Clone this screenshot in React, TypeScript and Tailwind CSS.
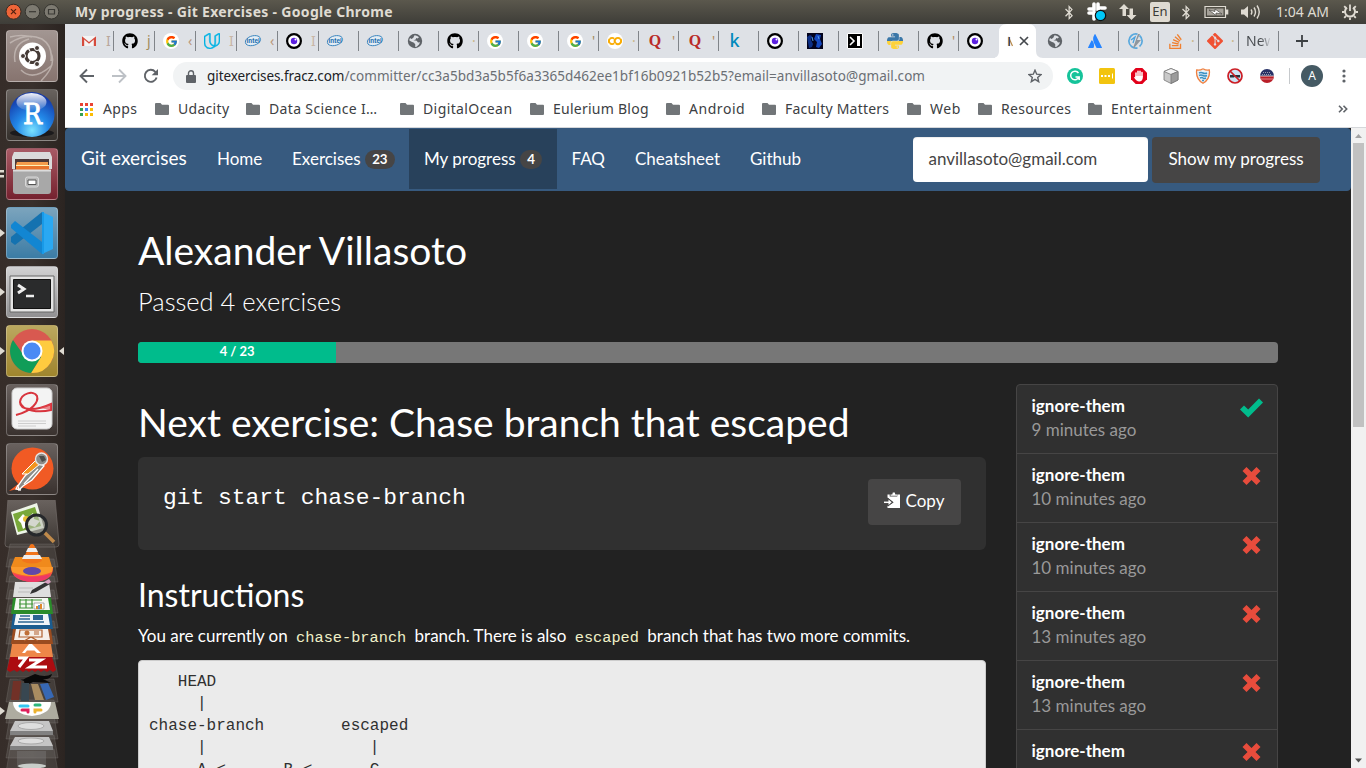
import React from "react";
import { FcGoogle } from "react-icons/fc";
import { FaGithub, FaBluetoothB } from "react-icons/fa";
import { SiUdacity, SiStackoverflow, SiGit, SiGooglecolab, SiAtlassian, SiPython } from "react-icons/si";

const Dot = ({ children }: { children: React.ReactNode }) => (
  <span className="flex size-4 items-center justify-center rounded-full bg-white">{children}</span>
);

const GmailIcon = () => (
  <svg width="16" height="16" viewBox="0 0 16 16">
    <path d="M1 3h14v10H1z" fill="#f4f4f4" />
    <path d="M1 13V3.2L8 9l7-5.800V13h-2.200V6.600L8 10.800 3.200 6.600V13z" fill="#d54b3d" />
  </svg>
);
const EyeIcon = () => (
  <svg width="16" height="16" viewBox="0 0 16 16">
    <circle cx="8" cy="8" r="6.900" fill="#fff" stroke="#000" strokeWidth="2.200" />
    <circle cx="8" cy="8" r="3.200" fill="#5b1fe0" />
    <circle cx="9.500" cy="6.500" r="1" fill="#fff" />
  </svg>
);
const GlobeIcon = () => (
  <svg width="16" height="16" viewBox="0 0 16 16">
    <circle cx="8" cy="8" r="7.200" fill="#5f6368" />
    <path d="M7.500 2.200c2 .3 3.300.7 4.500 2L10.500 5.500 9.200 5 8.700 6.500 6.500 7.300l3.200.5 1.300 1.700 2-.2-1 2.200-2.400 2.200L8.200 14l.1-2.600L7 9.800 4 8.500 2.200 7.200 3 5l1.500 1 1.800-1.200z" fill="#dee1e6" />
  </svg>
);
const IntelIcon = () => (
  <svg width="18" height="16" viewBox="0 0 18 16">
    <path d="M2 11C-.5 7 5 2.800 10.500 2.600c5.500-.2 7.500 3.200 5 6.400-3 3.800-11 5-13.500 2" fill="#e3edf5" stroke="#3a84bd" strokeWidth="1" />
    <text x="2.600" y="10" fontSize="6.400" fontWeight="700" fontFamily="Liberation Sans, sans-serif" fill="#1769aa">intel</text>
  </svg>
);
const SpaceIcon = () => (
  <svg width="16" height="16" viewBox="0 0 16 16">
    <path d="M0 0h16v16H0z" fill="#03031c" />
    <path d="M0 4l3-2 2 1-1 4 2 4-1 3-3 1z" fill="#0c2f86" />
    <path d="M9 1l5 1-1 4 2 5-3 4-3-1 1-5-3-3z" fill="#1548c0" />
    <path d="M5 4l1 4M11 3l1 3" stroke="#4f9be8" fill="none" strokeWidth="1" />
  </svg>
);
const PromptIcon = () => (
  <svg width="16" height="16" viewBox="0 0 16 16">
    <path d="M.5.500h15v15H.5z" fill="#000" stroke="#fff" />
    <path d="M3 4l4 4-4 4" fill="none" stroke="#fff" strokeWidth="1.600" />
    <path d="M10 3h3v10h-3z" fill="#fff" />
  </svg>
);
const PythonIcon = () => (
  <svg width="16" height="16" viewBox="0 0 24 24">
    <defs>
      <linearGradient id="py" x1="0" y1="0" x2="0" y2="1">
        <stop offset="0.480" stopColor="#3b77a8" />
        <stop offset="0.520" stopColor="#fdd23a" />
      </linearGradient>
    </defs>
    <SiPython size={24} fill="url(#py)" />
  </svg>
);
const SketchIcon = () => (
  <svg width="18" height="18" viewBox="0 0 18 18">
    <path d="M11.500 2.200A7 7 0 1 0 11.500 15.800M13.500 3.500a7 7 0 0 1 0 11" fill="none" stroke="#5aa9de" strokeWidth="1.700" />
    <path d="M7 16l5-14h2l-3 6h4L8 16z" fill="#8e969d" />
    <path d="M5 8l4-3-2 6" fill="none" stroke="#4aa3df" strokeWidth="1.300" />
  </svg>
);
const QuoraIcon = () => <span className="-mt-px font-['Liberation_Serif',serif] text-[16px] leading-5 font-bold text-[#b92b27]">Q</span>;

const tabs: { icon: React.ReactNode; text: string; wide?: boolean; ink: string }[] = [
  { icon: <GmailIcon />, text: "I", wide: true, ink: "text-[#b9a79b]" },
  { icon: <FaGithub size={16} className="text-black" />, text: "j", wide: true, ink: "text-[#a08a5a]" },
  { icon: <Dot><FcGoogle size={13} /></Dot>, text: "‹", wide: true, ink: "text-[#b9977b]" },
  { icon: <SiUdacity size={16} strokeWidth={0.8} stroke="currentColor" className="text-[#02b3e4]" />, text: "I", wide: true, ink: "text-[#c8b6a5]" },
  { icon: <IntelIcon />, text: "‹", wide: true, ink: "text-[#b9977b]" },
  { icon: <EyeIcon />, text: "I", wide: true, ink: "text-[#c8b6a5]" },
  { icon: <IntelIcon />, text: "", ink: "" },
  { icon: <IntelIcon />, text: "", ink: "" },
  { icon: <GlobeIcon />, text: "", ink: "" },
  { icon: <FaGithub size={16} className="text-black" />, text: "·", ink: "text-[#c9b68a]" },
  { icon: <Dot><FcGoogle size={13} /></Dot>, text: "", ink: "" },
  { icon: <Dot><FcGoogle size={13} /></Dot>, text: "", ink: "" },
  { icon: <Dot><FcGoogle size={13} /></Dot>, text: "'", ink: "text-[#a08a5a]" },
  { icon: <Dot><SiGooglecolab size={14} className="text-[#f9ab00]" /></Dot>, text: "·", ink: "text-[#c9b68a]" },
  { icon: <QuoraIcon />, text: "'", ink: "text-[#b08a5a]" },
  { icon: <QuoraIcon />, text: "'", ink: "text-[#b08a5a]" },
  { icon: <span className="-mt-0.5 -ml-px font-['Noto_Sans',sans-serif] text-[18px] leading-5 font-medium text-[#008abc]">k</span>, text: "", ink: "" },
  { icon: <EyeIcon />, text: "", ink: "" },
  { icon: <SpaceIcon />, text: "", ink: "" },
  { icon: <PromptIcon />, text: "", ink: "" },
  { icon: <PythonIcon />, text: "", ink: "" },
  { icon: <FaGithub size={16} className="text-black" />, text: "'", ink: "text-[#b08a5a]" },
  { icon: <EyeIcon />, text: "", ink: "" },
];
const tabsAfter = [
  { icon: <GlobeIcon />, text: "" },
  { icon: <SiAtlassian size={14} className="text-[#2684ff]" />, text: "" },
  { icon: <SketchIcon />, text: "" },
  { icon: <SiStackoverflow size={15} className="text-[#f08030]" />, text: "·" },
  { icon: <SiGit size={16} className="text-[#f05133]" />, text: "·" },
];

const bookmarks: [string, string, string][] = [
  ["Udacity", "w-[91px]", "tracking-[0.300px]"],
  ["Data Science I…", "w-[154px]", "tracking-[0.350px]"],
  ["DigitalOcean", "w-[130px]", "tracking-[0.400px]"],
  ["Eulerium Blog", "w-[136px]", "tracking-[0.250px]"],
  ["Android", "w-[96px]", "tracking-[0.550px]"],
  ["Faculty Matters", "w-[145px]", "tracking-[0.220px]"],
  ["Web", "w-[71px]", "tracking-[0.500px]"],
  ["Resources", "w-[110px]", "tracking-[0.350px]"],
  ["Entertainment", "w-[240px]", "tracking-[0.450px]"],
];

const attempts: [string, boolean][] = [
  ["9 minutes ago", true],
  ["10 minutes ago", false],
  ["10 minutes ago", false],
  ["13 minutes ago", false],
  ["13 minutes ago", false],
  ["", false],
];

const TitleBar = () => (
  <div className="flex h-6 shrink-0 items-center bg-linear-to-b from-[#5b584d] to-[#3e3d38] font-['Noto_Sans',sans-serif] text-[#dfdbd2]">
    <svg width="65" height="24" viewBox="0 0 65 24" className="mr-[10px]">
      <circle cx="13.500" cy="11.700" r="7.500" fill="#ee6538" stroke="#3a2a22" />
      <path d="M11 9.200l5 5m0-5l-5 5" stroke="#50200f" strokeWidth="1.200" />
      <circle cx="32.500" cy="11.700" r="7.300" fill="#7d7a71" stroke="#35342f" />
      <path d="M29 11.700h7" stroke="#3a3935" strokeWidth="1.200" />
      <circle cx="51.500" cy="11.700" r="7.300" fill="#7d7a71" stroke="#35342f" />
      <path d="M48.500 9.500h6v4.500h-6z" fill="none" stroke="#3a3935" strokeWidth="1.200" />
    </svg>
    <span className="-mt-0.5 w-[988px] text-[14px] font-bold tracking-[0.310px] whitespace-nowrap">My progress - Git Exercises - Google Chrome</span>
    <FaBluetoothB size={15} className="-ml-0.5 w-4" />
    <svg width="22" height="24" viewBox="0 0 22 24" className="ml-[9px]">
      <path d="M8 4v6M3 9h5M12 4v6M12 8h7M3 13h6M8 13v6" stroke="#fff" strokeWidth="3.600" strokeLinecap="round" />
      <circle cx="14.500" cy="15.500" r="5.200" fill="#00c8f8" stroke="#111" strokeWidth="1.200" />
    </svg>
    <svg width="18" height="18" viewBox="0 0 18 18" className="ml-[11px]" fill="#dfdbd2">
      <path d="M5 1l5 5H7v7H3.500V6H0zM12.500 17l-5-5h3V5.500H14V12h3.500z" />
    </svg>
    <span className="ml-[13px] flex h-5 w-5 items-center justify-center rounded-[2px] bg-[#dfdbd2] text-[13px] text-[#3c3b37]">En</span>
    <FaBluetoothB size={15} className="ml-2 w-4" />
    <svg width="25" height="14" viewBox="0 0 25 14" className="ml-[10px]">
      <path d="M1 1.500h20.500v11H1z" fill="none" stroke="#dfdbd2" strokeWidth="1.200" />
      <path d="M3 3.500h16.500v7H3z" fill="#a5a199" />
      <path d="M22 4.500h2.300v5H22" fill="#dfdbd2" />
      <path d="M5 5l6 1.500V4l7 5-6-1v2.500z" fill="#fff" stroke="#45443f" strokeWidth=".7" />
    </svg>
    <svg width="22" height="18" viewBox="0 0 22 18" className="ml-[11px]" fill="none" stroke="#dfdbd2" strokeWidth="1.400">
      <path d="M1 6.500h3L8 3v12l-4-3.500H1z" fill="#dfdbd2" stroke="none" />
      <path d="M11 6.500q1.800 2.500 0 5M14 4.500q3 4.500 0 9M17 2.500q4.500 6.500 0 13" />
    </svg>
    <span className="-mt-0.5 ml-[14px] w-[54px] text-[14px] whitespace-nowrap">1:04 AM</span>
    <svg width="18" height="18" viewBox="0 0 18 18" className="ml-[11px]" fill="none" stroke="#dfdbd2">
      <path d="M6 4.600a5 5 0 1 0 6 0" strokeWidth="2" />
      <path d="M9 1.500V8" strokeWidth="1.800" />
      <path d="M1 9h2.500M14.500 9H17M3.200 3.200L5 5M14.800 3.200L13 5M3.200 14.800L5 13M14.800 14.800L13 13M9 14.500V17" strokeWidth="1.800" />
    </svg>
  </div>
);

const Tile = ({ bg, mark, front, children }: { bg: string; mark?: string; front?: boolean; children: React.ReactNode }) => (
  <div className="flex h-[52px] w-[65px] shrink-0 items-center">
    <span className="w-1.5">
      {mark && (
        <svg width="5" height="10" viewBox="0 0 5 10" fill="#dfdbd2">
          <path d={mark} />
        </svg>
      )}
    </span>
    <div className={"flex size-[52px] items-center justify-center overflow-hidden rounded-[4px] border border-white/25 " + bg}>{children}</div>
    {front && (
      <svg width="6" height="10" viewBox="0 0 6 10" fill="#dfdbd2">
        <path d="M6 1v8L1 5z" />
      </svg>
    )}
  </div>
);
const arrow = "M0 1l5 4-5 4z";

const Stack = () => (
  <svg width="65" height="268" viewBox="0 500 65 268" className="shrink-0">
    <defs>
      <linearGradient id="glass" x1="0" y1="0" x2="0" y2="1">
        <stop offset="0" stopColor="#6b6460" />
        <stop offset="1" stopColor="#3a3430" />
      </linearGradient>
    </defs>
    <path d="M8 498h47l4 46q0 3-3 3H8q-3 0-3-3z" fill="url(#glass)" stroke="#726c68" strokeWidth=".7" />
    {[545, 560, 577, 591, 606, 622, 637, 655, 680, 701, 717, 736, 750].map((y) => (
      <path key={y} d={`M10 ${y - 1}h44l4 23H6z`} fill="#7d777344" stroke="#8a848066" strokeWidth=".7" />
    ))}
    <path d="M11 512l26-9 7 25-27 7z" fill="#eef5e8" />
    <path d="M13 514l22-7 6 19-23 6z" fill="#79a83a" />
    <path d="M18 520l5-6 4 4 6-5 1 6 6 2-5 6-6-2-6 4-2-6z" fill="#fff" />
    <circle cx="26" cy="519" r="3" fill="#eac036" />
    <path d="M44 532l10 10" stroke="#c08a4a" strokeWidth="3.500" />
    <circle cx="36.500" cy="525" r="10" fill="#b8bdaf99" stroke="#26282b" strokeWidth="3" />
    <path d="M15 557h34l3 10H11z" fill="#f08a1c" />
    <path d="M30 545q2-2 4 0l8 16q-10 5-20 0z" fill="#f1741b" />
    <path d="M28 548h8l2 4H26zM24 555h16l2 4H22z" fill="#eee" />
    <path d="M11 567h42q1 14-20 15-22-1-22-15" fill="#f9543e" />
    <path d="M11 567h42l-1 5q-20 8-40 0z" fill="#fb9a2c" />
    <path d="M13 574q18 6 38 0-5 8-18 8t-20-8" fill="#ed3868" />
    <ellipse cx="32" cy="571" rx="9" ry="4" fill="#5f48a8" />
    <path d="M15 582h34l2 15H13z" fill="#dedede" />
    <path d="M19 588h14M18 592h12" stroke="#bbb" />
    <path d="M30 594l2-4 14-8 4 2-14 8z" fill="#333" />
    <path d="M44 582l5-3 2 3-3 2z" fill="#d8a0c0" />
    <path d="M13 598h38l2 16H11z" fill="#2a8b2a" />
    <path d="M16 598h32l2 12H14z" fill="#f5f8f2" />
    <path d="M20 599v9M26 599v9M32 599v9M20 600h22M19 604h14M19 608h14" stroke="#3d9436" strokeWidth="1.200" fill="none" />
    <path d="M34 603h10v6H34z" fill="#fff" stroke="#777" strokeWidth=".6" />
    <path d="M37 609v-3M41 609v-5" stroke="#e08a2a" strokeWidth="2" />
    <path d="M39 609v-4" stroke="#3a78b8" strokeWidth="1.500" />
    <path d="M13 614h38l2 15H11z" fill="#1b5c8f" />
    <path d="M16 614h32l2 11H14z" fill="#f1f5f8" />
    <path d="M20 616h10M19 619h11M18 622h26" stroke="#2d6591" strokeWidth="1.300" />
    <path d="M33 615h10v5H33z" fill="#2d6591" />
    <path d="M13 629h38l2 15H11z" fill="#9a4c20" />
    <path d="M16 629h32l2 11H14z" fill="#f6efe8" />
    <path d="M20 630h22v7H19zM24 641l7-4 7 4M34 632h5M34 634h5" fill="none" stroke="#b05e2c" strokeWidth="1.200" />
    <circle cx="27" cy="633" r="2.500" fill="#c07038" />
    <path d="M12 644h39l2 13H10z" fill="#ee8748" />
    <path d="M22 653l7-9h3l9 9h-4l-2.500-2.500H27L25 653z" fill="#fff" />
    <path d="M10 657h42l4 13-3 2-3-2-3 2-3-2-3 2-3-2-3 2-3-2-3 2-3-2-3 2-3-2-3 2-3-2-4 2-3-2z" fill="#ac0c10" />
    <path d="M18 658h8l-7 9M29 660h12l-11 7h17" fill="none" stroke="#fff" strokeWidth="3" />
    <path d="M16 678q6 3 10 0l9-4q10 4 17 0-1 6-9 5l8 4-18-1-8 4-1-5z" fill="#090909" />
    <path d="M13 681h8l-2 19h-8z" fill="#713127" />
    <path d="M22 683h7v18h-8z" fill="#384751" />
    <path d="M31 684h7l6 16h-9z" fill="#a98c61" />
    <path d="M40 684l8-1 6 14-8 3z" fill="#3768b4" />
    <path d="M9 702h46l4 17H5z" fill="#aeaca0" />
    <path d="M13 702h38q0 12-19 14-19-2-19-14" fill="#fff" />
    <path d="M20 706h8" stroke="#36c5f0" strokeWidth="3" strokeLinecap="round" />
    <path d="M35 705h5" stroke="#2eb67d" strokeWidth="3" strokeLinecap="round" />
    <path d="M22 710h6v2" stroke="#e01e5a" strokeWidth="3" strokeLinecap="round" fill="none" />
    <path d="M35 712v-2h6" stroke="#ecb22e" strokeWidth="3" strokeLinecap="round" fill="none" />
    <path d="M0 707l5 4-5 4z" fill="#dfdbd2" />
    <path d="M15 721h34l4 10H10z" fill="#c5c5c5" />
    <path d="M10 731h43v4H10z" fill="#818181" />
    <ellipse cx="31" cy="726" rx="13" ry="3.500" fill="#dedede" stroke="#aaa" />
    <path d="M15 737h34l4 9H10z" fill="#c5c5c5" />
    <path d="M10 746h43v4H10z" fill="#818181" />
    <ellipse cx="31" cy="741" rx="13" ry="3" fill="#dedede" stroke="#aaa" />
    <path d="M17 751h29v16H17z" fill="#8885" />
    <ellipse cx="32" cy="766" rx="14" ry="2.500" fill="#c8cdc9" />
  </svg>
);

const Launcher = () => (
  <div className="flex w-[65px] shrink-0 flex-col gap-[7px] overflow-hidden bg-linear-to-r from-[#362d29] via-[#38302c] to-[#2b2421] pt-1.5">
    <Tile bg="bg-linear-to-b from-[#a29692] to-[#87746f]">
      <svg width="50" height="50" viewBox="0 0 50 50">
        <path d="M3 12Q20 1 35 8q11 7 9 22M8 31Q5 13 22 8M14 39q12 12 30-4M44 22q6 12-10 28M3 6q12-3 22 0" fill="none" stroke="#d0c6c2" strokeWidth="1.500" opacity=".65" />
        <circle cx="25.500" cy="25" r="13.500" fill="#fff" />
        <circle cx="25.500" cy="25" r="6.500" fill="none" stroke="#463b37" strokeWidth="3.200" strokeDasharray="12.600 1" />
        <circle cx="16" cy="25" r="2.500" fill="#463b37" stroke="#fff" />
        <circle cx="30" cy="17" r="2.500" fill="#463b37" stroke="#fff" />
        <circle cx="30" cy="33" r="2.500" fill="#463b37" stroke="#fff" />
      </svg>
    </Tile>
    <Tile bg="bg-linear-to-b from-[#68625e] to-[#35302c]">
      <svg width="50" height="50" viewBox="0 0 50 50">
        <defs>
          <radialGradient id="rg" cx=".5" cy=".85" r=".8"><stop offset="0" stopColor="#7be3ff" /><stop offset=".45" stopColor="#2288e8" /><stop offset="1" stopColor="#1438a8" /></radialGradient>
          <linearGradient id="sh" x1="0" y1="0" x2="0" y2="1"><stop offset="0" stopColor="#fff" stopOpacity=".95" /><stop offset="1" stopColor="#fff" stopOpacity=".05" /></linearGradient>
        </defs>
        <ellipse cx="25" cy="43" rx="22" ry="4" fill="#1b1a1c" />
        <circle cx="25" cy="24.500" r="22.500" fill="url(#rg)" />
        <ellipse cx="24.500" cy="12" rx="15" ry="9" fill="url(#sh)" />
        <text x="16" y="34" fontSize="28" fontFamily="DejaVu Serif, serif" textLength="19" lengthAdjust="spacingAndGlyphs" fill="#fff" stroke="#fff" strokeWidth=".8">R</text>
      </svg>
    </Tile>
    <Tile bg="bg-linear-to-b from-[#a85a65] to-[#75212f]" mark="M0 1h4v2.500H0zM0 6h4v2.500H0z">
      <svg width="50" height="50" viewBox="0 0 50 50">
        <path d="M5 8l2-5h36l2 5v12H5z" fill="#dadada" />
        <path d="M8 10h34v12H8z" fill="#4c3837" />
        <path d="M10 13h31v3H9z" fill="#f49b4b" />
        <path d="M9 17h33v5H9z" fill="#e8742c" />
        <path d="M9 16.500h33" stroke="#fff0b5" />
        <path d="M6 21h38v21q0 3-3 3H9q-3 0-3-3z" fill="#a8a8a8" />
        <path d="M6 20.500h38v2H6z" fill="#dcdcdc" />
        <rect x="18.500" y="28" width="13" height="10" rx="2" fill="#b8b8b8" stroke="#d8d8d8" />
        <path d="M21 31h8v4.500h-8z" fill="#fff" stroke="#555" />
      </svg>
    </Tile>
    <Tile bg="bg-linear-to-b from-[#7ba4bd] to-[#3b7ca5]" mark={arrow}>
      <svg width="50" height="50" viewBox="0 0 50 50">
        <path d="M35 4l11 5v32l-11 5z" fill="#2aa8f2" />
        <path d="M35 4v12L8 37l-4-3v-5z" fill="#1472b0" />
        <path d="M4 17l4-4 27 21v12L4 20z" fill="#1286d2" />
        <path d="M35 4v42l2 0V4z" fill="#189ae8" />
      </svg>
    </Tile>
    <Tile bg="bg-linear-to-b from-[#d2d2d3] to-[#919092]" mark={arrow}>
      <svg width="50" height="50" viewBox="0 0 50 50">
        <path d="M3 9h44v36H3z" fill="#e4e4e4" stroke="#666" />
        <path d="M6.500 12.500h37v29h-37z" fill="#2a2b2c" stroke="#111" />
        <path d="M11 18l6 4-6 4" fill="none" stroke="#eee" strokeWidth="3" />
        <path d="M19 29h8" stroke="#eee" strokeWidth="2.500" />
      </svg>
    </Tile>
    <Tile bg="bg-linear-to-b from-[#bba85f] to-[#9f852d]" mark={arrow} front>
      <svg width="48" height="48" viewBox="0 0 48 48">
        <circle cx="24" cy="24" r="22" fill="#d85950" />
        <path d="M24 13.500h19.300A22 22 0 0 1 23 46l10-16z" fill="#fecb3f" />
        <path d="M5 13A22 22 0 0 0 23 46l10-16-16 0z" fill="#109d58" />
        <circle cx="24" cy="24" r="10.500" fill="#fff" />
        <circle cx="24" cy="24" r="8.500" fill="#4a8af4" />
      </svg>
    </Tile>
    <Tile bg="bg-linear-to-b from-[#69615e] to-[#3a322f]">
      <svg width="50" height="50" viewBox="0 0 50 50">
        <rect x="5" y="3" width="40" height="41" rx="5" fill="#f3f3f3" stroke="#ccc" />
        <path d="M9 30C25 26 32 17 30 11 27 5 14 8 13 17c0 9 16 9 31 2v6C32 28 15 26 13 17" fill="none" stroke="#d8343d" strokeWidth="2" />
        <path d="M32 23l12-4v6z" fill="#e2474f99" />
        <path d="M11 36h28M11 38.500h28M11 41h18" stroke="#c4c4c4" strokeWidth=".8" />
      </svg>
    </Tile>
    <Tile bg="bg-linear-to-b from-[#69615e] to-[#3a322f]">
      <svg width="50" height="50" viewBox="0 0 50 50">
        <circle cx="25.500" cy="24.500" r="21" fill="#f15a24" />
        <path d="M2 47l13-10 4 6z" fill="#f15a24" />
        <path d="M31 18l6 4-12 14-9 6-4 4-1-4 7-10z" fill="#8b8b88" stroke="#fff" strokeWidth="1.300" />
        <path d="M15 30l14-14 4 4-12 10z" fill="#f3941f" stroke="#fff" />
        <path d="M17 40l14-15" stroke="#fff" strokeWidth="1.300" />
        <circle cx="34.500" cy="15" r="6" fill="#8b8b88" stroke="#e5e5e5" strokeWidth="1.400" />
        <path d="M32 12h5l2 4-4 2z" fill="#4c4c4a" />
        <path d="M11 41l-2 4 5 1" stroke="#fff" strokeWidth="1.300" fill="none" />
      </svg>
    </Tile>
    <div className="-mt-[2px] flex"><Stack /></div>
  </div>
);

const TabStrip = () => (
  <div className="flex h-[34px] shrink-0 items-center bg-[#dee1e6] pl-2 font-['Noto_Sans',sans-serif] text-[14px] leading-5">
    {tabs.map((t, i) => (
      <div key={i} className={"flex h-5 shrink-0 items-center " + (t.wide ? "w-[41px] " : "w-10 ") + (i === tabs.length - 1 ? "" : "border-r border-[#808489]")}>
        <span className="ml-[7px] flex w-[18px] shrink-0 justify-center">{t.icon}</span>
        <span className={"ml-2 " + t.ink}>{t.text}</span>
      </div>
    ))}
    <div className="-ml-1 flex h-[34px] w-12 shrink-0 items-end">
      <svg width="48" height="34" viewBox="0 0 48 34" className="shrink-0">
        <path d="M-3 34Q4 34 4 27V8Q4 0 12 0H33Q41 0 41 8V27Q41 34 48 34z" fill="#fff" />
        <path d="M13.500 22V13l4 9" fill="none" stroke="#b98a4a" strokeWidth="1.200" />
        <path d="M14.500 22V13" stroke="#3c4a78" strokeWidth="1.200" />
        <path d="M25 13l8 8m0-8l-8 8" stroke="#45494d" strokeWidth="1.700" />
      </svg>
    </div>
    {tabsAfter.map((t, i) => (
      <div key={i} className={"flex h-5 w-10 shrink-0 items-center border-r border-[#808489] " + (i === 0 ? "-ml-1" : "")}>
        <span className="ml-[7px] flex w-[18px] shrink-0 justify-center">{t.icon}</span>
        <span className="ml-[7px] text-[#c9b68a]">{t.text}</span>
      </div>
    ))}
    <div className="flex h-5 w-10 shrink-0 items-center overflow-hidden border-r border-[#808489] pl-[7px]">
      <span className="w-[24px] overflow-hidden bg-linear-to-r from-[#45494d] from-60% to-[#45494d22] bg-clip-text whitespace-nowrap text-transparent">New</span>
    </div>
    <svg width="12" height="12" viewBox="0 0 12 12" className="ml-[17px]">
      <path d="M6 0v12M0 6h12" stroke="#3c4043" strokeWidth="1.800" />
    </svg>
  </div>
);

const Cell = ({ children }: { children: React.ReactNode }) => (
  <span className="flex w-8 shrink-0 items-center justify-center">{children}</span>
);

const Toolbar = () => (
  <div className="flex h-9 shrink-0 items-center bg-white pl-1.5 font-['Noto_Sans',sans-serif]">
    <Cell>
      <svg width="16" height="16" viewBox="0 0 16 16" fill="none" stroke="#5f6368" strokeWidth="1.900"><path d="M15 8H2M8 1.500L1.500 8 8 14.500" /></svg>
    </Cell>
    <Cell>
      <svg width="16" height="16" viewBox="0 0 16 16" fill="none" stroke="#bdc1c6" strokeWidth="1.900"><path d="M1 8h13M8 1.500L14.500 8 8 14.500" /></svg>
    </Cell>
    <Cell>
      <svg width="16" height="16" viewBox="0 0 16 16"><path d="M13.600 9.500A6 6 0 1 1 12.300 3.800L14 5.500" fill="none" stroke="#5f6368" strokeWidth="1.900" /><path d="M15 1v6.300H8.700z" fill="#5f6368" /></svg>
    </Cell>
    <div className="mr-1.5 ml-1.5 flex h-7 w-[880px] shrink-0 items-center rounded-full bg-[#f1f3f4] pr-[11px] pl-[13px]">
      <svg width="10" height="13" viewBox="0 0 10 13"><path d="M1 5h8q1 0 1 1v6q0 1-1 1H1q-1 0-1-1V6q0-1 1-1" fill="#5f6368" /><path d="M2.500 5.500V3.300a2.500 2.500 0 0 1 5 0v2.200" fill="none" stroke="#5f6368" strokeWidth="1.400" /></svg>
      <span className="ml-[11px] flex-1 text-[13.500px] whitespace-nowrap text-[#6b6f74]"><span className="tracking-[-0.080px] text-[#202124]">gitexercises.fracz.com</span><span className="tracking-[0.060px]">/committer/cc3a5bd3a5b5f6a3365d462ee1bf16b0921b52b5?email=anvillasoto@gmail.com</span></span>
      <svg width="14" height="14" viewBox="0 0 14 14"><path d="M7 1.200l1.700 4 4.300.4-3.300 2.800 1 4.300L7 10.400l-3.700 2.300 1-4.300L1 5.600l4.300-.4z" fill="none" stroke="#5f6368" strokeWidth="1.400" /></svg>
    </div>
    <Cell><svg width="16" height="16" viewBox="0 0 16 16"><circle cx="8" cy="8" r="8" fill="#15c39a" /><path d="M11.500 5A4.300 4.300 0 1 0 12 9H8.500M12.200 8.500V12" fill="none" stroke="#fff" strokeWidth="1.500" /></svg></Cell>
    <Cell><svg width="16" height="16" viewBox="0 0 16 16"><rect width="16" height="16" rx="1.500" fill="#f2c40f" /><path d="M2 7h2v2H2zM5.500 7h2v2h-2zM9 7h2v2H9zM13 5.500h1v5h-1z" fill="#fff" /></svg></Cell>
    <Cell><svg width="16" height="16" viewBox="0 0 16 16"><path d="M4.700 0h6.600L16 4.700v6.600L11.300 16H4.700L0 11.300V4.700z" fill="#e2001a" /><path d="M5 9V5M7 9V3.300M9 9V3.300M11 9V4.600" stroke="#fff" strokeWidth="1.500" strokeLinecap="round" /><path d="M4.300 8h7.400v2.500Q11 13.500 8.300 13.500 5.500 13.500 3 9.500q.5-1 1.500-.3z" fill="#fff" /></svg></Cell>
    <Cell><svg width="16" height="16" viewBox="0 0 16 16" stroke="#777" strokeWidth=".8"><path d="M8 .5l7 3v8.500l-7 3.500-7-3.500V3.500z" fill="#c9c9c9" /><path d="M8 .5l7 3-7 3-7-3z" fill="#f3f3f3" /><path d="M8 6.500v9l7-3.500V3.500z" fill="#9b9b9b" /></svg></Cell>
    <Cell><svg width="16" height="16" viewBox="0 0 16 16"><path d="M8 .7q3 2 6.300 1.300Q15.500 11 8 15.300.5 11 1.700 2 5 2.700 8 .7" fill="#e7f1f8" stroke="#f08040" strokeWidth="1.300" /><path d="M4 5q2-1 4 0t4 0M4 7.500q2-1 4 0t4 0M5 10q2-1 3 0t3 0M7 12.500h2" stroke="#3c91c4" strokeWidth="1.500" fill="none" /></svg></Cell>
    <Cell><svg width="16" height="16" viewBox="0 0 16 16"><circle cx="8" cy="8" r="7" fill="#cce4f5" /><path d="M3 7h10v2.500H9L8 8.500 7 9.500H3z" fill="#27313a" /><circle cx="8" cy="8" r="7" fill="none" stroke="#cc1e25" strokeWidth="1.700" /><path d="M3 3l10 10" stroke="#cc1e25" strokeWidth="1.700" /></svg></Cell>
    <Cell><svg width="16" height="16" viewBox="0 0 16 16"><path d="M1 8a7 7 0 0 1 14 0z" fill="#283267" /><path d="M1 8a7 7 0 0 0 14 0z" fill="#b91e28" /><path d="M1 8h14" stroke="#eee" strokeWidth=".8" /><path d="M2 11h12" stroke="#e8a0a4" strokeWidth=".8" /><path d="M4 4.500h8M3 6.500h10" stroke="#99a" strokeDasharray="1 1" /></svg></Cell>
    <span className="mr-[6px] ml-[6px] h-4 w-px bg-[#c6c9cc]" />
    <Cell><span className="flex size-[22px] items-center justify-center rounded-full bg-[#455a64] text-[12px] text-white">A</span></Cell>
    <Cell><svg width="4" height="14" viewBox="0 0 4 14" fill="#5f6368"><circle cx="2" cy="2" r="1.600" /><circle cx="2" cy="7" r="1.600" /><circle cx="2" cy="12" r="1.600" /></svg></Cell>
  </div>
);

const BookmarkBar = () => (
  <div className="flex h-[34px] shrink-0 items-center border-b border-[#d5d7da] bg-white pb-[3px] pl-[15px] font-['Noto_Sans',sans-serif] text-[14px] whitespace-nowrap text-[#3c4043]">
    <svg width="13" height="13" viewBox="0 0 13 13">
      {["#ea4335", "#ea4335", "#ea4335", "#34a053", "#4285f4", "#fbbc05", "#34a053", "#fbbc05", "#fbbc05"].map((c, i) => (
        <rect key={i} x={(i % 3) * 5} y={Math.floor(i / 3) * 5} width="3" height="3" fill={c} />
      ))}
    </svg>
    <span className="-mt-0.5 ml-[10px] w-[52px] tracking-[0.400px]">Apps</span>
    {bookmarks.map(([name, w, tracking]) => (
      <span key={name} className={"flex shrink-0 items-center gap-[9px] " + w}>
        <svg width="14" height="12" viewBox="0 0 14 12"><path d="M1 0h4.500L7 1.700h6q1 0 1 1V11q0 1-1 1H1q-1 0-1-1V1q0-1 1-1" fill="#717578" /></svg>
        <span className={"-mt-0.5 " + tracking}>{name}</span>
      </span>
    ))}
    <svg width="10" height="8" viewBox="0 0 10 8" className="ml-[10px]" fill="none" stroke="#5f6368" strokeWidth="1.600">
      <path d="M1 .8L4.200 4 1 7.200M5.500.8L8.700 4 5.500 7.200" />
    </svg>
  </div>
);

const Badge = ({ children }: { children: React.ReactNode }) => (
  <span className="mt-[3px] ml-[4.500px] flex h-[19px] items-center rounded-full bg-[#464545] px-[7px] pb-px text-[13.300px] font-bold">{children}</span>
);

const Navbar = () => (
  <nav className="flex h-[63px] shrink-0 items-start rounded-[4px] border border-[#375a7f] bg-[#375a7f] pl-[15px] text-white">
    <span className="w-[121px] pt-[15px] text-[19px] leading-7">Git exercises</span>
    <span className="flex h-[60px] w-[75px] px-[15px] pt-[18px]">Home</span>
    <span className="flex h-[60px] w-[132px] px-[15px] pt-[18px]">Exercises<Badge>23</Badge></span>
    <span className="flex h-[60px] w-[148px] bg-[#28415b] px-[15px] pt-[18px] whitespace-nowrap">My progress<Badge>4</Badge></span>
    <span className="w-[63px] px-[14.500px] pt-[18px]">FAQ</span>
    <span className="w-[115px] px-[15px] pt-[18px]">Cheatsheet</span>
    <span className="w-[81px] px-[15px] pt-[18px]">Github</span>
    <span className="mt-2 ml-[97px] h-[45px] w-[235px] rounded-[4px] bg-white px-[15.500px] pt-2.5 text-[#464545] inset-shadow-[0_1px_1px_#00000013]">anvillasoto@gmail.com</span>
    <span className="mt-2 ml-1 h-[46px] w-[168px] rounded-[4px] bg-[#464545] pt-2.5 text-center">Show my progress</span>
  </nav>
);

const Page = () => (
  <div className="flex min-h-0 flex-1 flex-col overflow-hidden bg-[#222] font-['Lato',sans-serif] text-[17px] leading-6 text-white">
    <Navbar />
    <main className="flex flex-col pr-[73px] pl-[73px]">
      <h1 className="mt-[38px] text-[39px] leading-[43px]">Alexander Villasoto</h1>
      <p className="mt-[11px] text-[25.500px] leading-9 font-light">Passed 4 exercises</p>
      <div className="mt-[23px] h-[21px] overflow-hidden rounded-[4px] bg-[#777]">
        <div className="h-full w-[17.391%] bg-[#00bc8c] text-center text-[13px] leading-[18px] font-bold">4 / 23</div>
      </div>
      <div className="mt-[21px] flex gap-[30px]">
        <section className="w-[848px]">
          <h2 className="mt-[17px] text-[39px] leading-[43px]">Next exercise: Chase branch that escaped</h2>
          <div className="mt-[13px] flex h-[93px] items-start justify-between rounded-[6px] bg-[#303030] pt-[22px] pr-[25px] pl-[25px]">
            <code className="mt-[3px] font-['Liberation_Mono',monospace] text-[22.950px] leading-[33px]">git start chase-branch</code>
            <span className="flex h-[46px] w-[93px] items-start rounded-[4px] bg-[#464545] pt-2.5 pl-4">
              <svg width="17" height="17" viewBox="0 0 17 17" className="mt-[3px] mr-[4.500px]">
                <path d="M3.500 2.500h2.200v2h7.600v-2h2.700V16H3.500v-2l6-3.500-6-5z" fill="#fff" />
                <path d="M6.500 3.800V2.500h1.800L8.800.5h2l.5 2h1.800v1.300z" fill="#fff" />
                <path d="M4 6v3H0v2.500h4v3l5.500-4.300z" fill="#464545" />
                <path d="M0 10.300h5.500" stroke="#fff" strokeWidth="1.500" />
                <path d="M4.500 7.500l3.200 2.800-3.200 2.800z" fill="#fff" />
              </svg>
              Copy
            </span>
          </div>
          <h3 className="mt-[27px] text-[32px] leading-[36px]">Instructions</h3>
          <p className="mt-[11px] flex h-6 whitespace-pre">
            You are currently on <code className="mt-0.5 px-1 font-['Liberation_Mono',monospace] text-[15.300px] text-[#f0f0c8]">chase-branch</code> branch. There is also <code className="mt-0.5 px-1 font-['Liberation_Mono',monospace] text-[15.300px] text-[#f0f0c8]">escaped</code> branch that has two more commits.
          </p>
          <pre className="mt-3 rounded-[4px] border border-[#ccc] bg-[#ebebeb] px-2.5 py-[10px] font-['Liberation_Mono',monospace] text-[16px] leading-[22px] text-[#303030]">{`   HEAD
     |
chase-branch        escaped
     |                 |
     A <----- B <----- C
`}</pre>
        </section>
        <aside className="w-[262px] rounded-t-[4px] border border-[#464545] bg-[#303030]">
          {attempts.map(([when, ok], i) => (
            <div key={i} className="flex h-[69px] justify-between border-b border-[#464545] pt-[9px] pr-[14px] pl-[14.500px]">
              <div className="flex flex-col">
                <b>ignore-them</b>
                <span className="text-[#999]">{when}</span>
              </div>
              {ok ? (
                <svg width="23" height="20" viewBox="0 0 23 20" className="mt-[4px]"><path d="M0 11.500l4-4 4.200 4L19 .5l4 4-14.800 15z" fill="#00bc8c" /></svg>
              ) : (
                <svg width="19" height="18" viewBox="-.5 0 19 18" className="mt-[4px] mr-[2px]"><path d="M4 0l5 5 5-5 4 4-5 5 5 5-4 4-5-5-5 5-4-4 5-5-5-5z" fill="#e74c3c" /></svg>
              )}
            </div>
          ))}
        </aside>
      </div>
    </main>
  </div>
);

const Scrollbar = () => (
  <div className="flex w-[15px] shrink-0 flex-col items-center bg-[#f1f1f1]">
    <svg width="15" height="15" viewBox="0 0 15 15"><path d="M4 10l3.500-4 3.500 4z" fill="#a3a3a3" /></svg>
    <span className="h-[284px] w-[11px] bg-[#c1c1c1]" />
    <svg width="15" height="15" viewBox="0 0 15 15" className="mt-auto"><path d="M4 5.500h7L7.500 9.500z" fill="#505050" /></svg>
  </div>
);

export default function App() {
  return (
    <div className="flex h-[768px] w-[1366px] flex-col overflow-hidden bg-[#222]">
      <TitleBar />
      <div className="flex min-h-0 flex-1">
        <Launcher />
        <div className="flex min-w-0 flex-1 flex-col">
          <TabStrip />
          <Toolbar />
          <BookmarkBar />
          <div className="flex min-h-0 flex-1">
            <Page />
            <Scrollbar />
          </div>
        </div>
      </div>
    </div>
  );
}
